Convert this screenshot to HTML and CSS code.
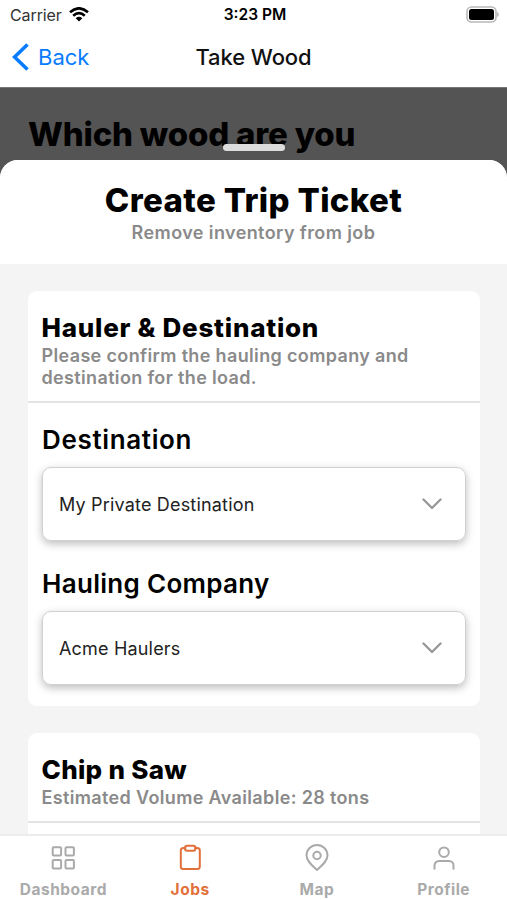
FILE: index.html
```
<!DOCTYPE html>
<html lang="en">
<head>
<meta charset="utf-8">
<title>Take Wood</title>
<link rel="stylesheet" href="styles.css">
</head>
<body>
<div class="phone">
  <header class="top">
    <div class="status">
      <div class="carrier"><span class="carrier-name">Carrier</span>
        <svg class="wifi" viewBox="0 0 20 15" width="20" height="15"><g fill="none" stroke="#000" stroke-width="2.6"><path d="M1 5.2Q10-2.6 19 5.2"/><path d="M4.2 8.7Q10 3.6 15.8 8.7"/></g><path d="M6.7 11.2Q10 8.4 13.3 11.2L10 14.6Z"/></svg>
      </div>
      <span class="time">3:23 PM</span>
      <svg class="battery" viewBox="0 0 34 17" width="34" height="17"><rect x="1" y="1" width="29" height="15" rx="4.5" fill="#fff" stroke="#b9b9b9" stroke-width="1.6"/><rect x="3" y="3" width="25" height="11" rx="2.5"/><path d="M31.6 6.5q1.6 2 0 4z" fill="#aaa" stroke="#aaa" stroke-width=".6"/></svg>
    </div>
    <nav class="navbar">
      <a class="back"><svg viewBox="0 0 17 28" width="17" height="28"><path d="M15.500 1.5 2.500 14l13 12.500" fill="none" stroke="#087cff" stroke-width="3.6"/></svg><span class="back-label">Back</span></a>
      <span class="nav-title">Take Wood</span>
    </nav>
  </header>
  <main class="stage">
    <div class="backdrop"><h2 class="question">Which wood are you</h2><div class="grabber"></div></div>
    <section class="sheet">
      <div class="sheet-head">
        <h1 class="sheet-title">Create Trip Ticket</h1>
        <p class="sheet-sub">Remove inventory from job</p>
      </div>
      <div class="sheet-body">
        <article class="card">
          <div class="card-head">
            <h3 class="card-title">Hauler &amp; Destination</h3>
            <p class="note">Please confirm the hauling company and<br>destination for the load.</p>
          </div>
          <div class="fields">
            <h4 class="label">Destination</h4>
            <div class="select"><span>My Private Destination</span><svg viewBox="0 0 20 12" width="20" height="12"><path d="M1.500 1.500 10 10l8.500-8.500"/></svg></div>
            <h4 class="label second">Hauling Company</h4>
            <div class="select"><span>Acme Haulers</span><svg viewBox="0 0 20 12" width="20" height="12"><path d="M1.500 1.500 10 10l8.500-8.500"/></svg></div>
          </div>
        </article>
        <article class="card next">
          <div class="card-head">
            <h3 class="card-title chip">Chip n Saw</h3>
            <p class="note">Estimated Volume Available: 28 tons</p>
          </div>
        </article>
      </div>
    </section>
  </main>
  <footer class="tabs">
    <a class="tab"><svg viewBox="0 0 28 28" width="28" height="28"><rect x="3.700" y="3.200" width="8.400" height="8.400" rx="1"/><rect x="16.500" y="3.200" width="8.400" height="8.400" rx="1"/><rect x="3.700" y="16" width="8.400" height="8.400" rx="1"/><rect x="16.500" y="16" width="8.400" height="8.400" rx="1"/></svg><span>Dashboard</span></a>
    <a class="tab active"><svg viewBox="0 0 28 28" width="28" height="28"><path d="M9.500 4H7.300a2.500 2.500 0 0 0-2.500 2.500V22.500a2.500 2.500 0 0 0 2.500 2.500h14a2.500 2.500 0 0 0 2.500-2.500V6.500a2.500 2.500 0 0 0-2.500-2.500H19"/><rect x="9" y="1.800" width="10.500" height="5" rx="2.200"/></svg><span>Jobs</span></a>
    <a class="tab"><svg viewBox="0 0 28 28" width="28" height="28"><path d="M14 26C9 21.500 3.500 17 3.500 11.500a10.500 10.500 0 0 1 21 0C24.500 17 19 21.500 14 26Z"/><circle cx="14" cy="11.500" r="3.700"/></svg><span>Map</span></a>
    <a class="tab"><svg viewBox="0 0 28 28" width="28" height="28"><circle cx="14" cy="8.200" r="4.800"/><path d="M4.500 24.800V21.500a4.500 4.500 0 0 1 4.500-4.500h10a4.500 4.500 0 0 1 4.500 4.500v3.300"/></svg><span>Profile</span></a>
  </footer>
</div>
</body>
</html>
```
FILE: styles.css
```
* { box-sizing: border-box; }
body { margin: 0; background: #fff; font-family: Inter, "Liberation Sans", sans-serif; color: #000; }
h1, h2, h3, h4, p { margin: 0; white-space: nowrap; }
.phone { width: 507px; height: 900px; display: flex; flex-direction: column; overflow: hidden; }
.top { height: 87px; flex: none; background: #fff; }
.status { height: 29px; display: grid; grid-template-columns: 1fr auto 1fr; align-items: center; padding: 0 7px 0 10px; }
.carrier { display: flex; align-items: center; gap: 7px; }
.carrier-name { font-size: 16px; letter-spacing: -.1px; color: #333; }
.time { font-size: 15.500px; font-weight: 600; }
.battery { justify-self: end; margin-top: -1px; }
.navbar { height: 58px; display: grid; grid-template-columns: 1fr auto 1fr; align-items: center; padding: 0 12px 2px; }
.back { display: flex; align-items: center; gap: 9px; color: #087cff; }
.back-label { font-size: 22px; }
.nav-title { font-size: 22px; font-weight: 500; letter-spacing: -.1px; color: #111; }
.stage { flex: 1; min-height: 0; background: #545454; border-top: 1px solid #777; display: flex; flex-direction: column; }
.backdrop { height: 72px; flex: none; position: relative; padding: 25px 28px 0; }
.question { font-size: 33px; line-height: 42px; font-weight: 800; letter-spacing: -.2px; }
.grabber { position: absolute; left: 223px; top: 56px; width: 62px; height: 7px; border-radius: 4px; background: #dcdcdc; }
.sheet { flex: 1; min-height: 0; background: #f4f4f4; border-radius: 18px 18px 0 0; overflow: hidden; }
.sheet-head { height: 104px; background: #fff; text-align: center; padding-top: 19px; }
.sheet-title { font-size: 33px; line-height: 42px; font-weight: 800; letter-spacing: .35px; }
.sheet-sub { font-size: 18px; line-height: 22px; font-weight: 600; letter-spacing: .4px; color: #8a8a8a; padding-top: 1px; }
.sheet-body { padding: 27px 27px 0 28px; }
.card { background: #fff; border-radius: 9px; height: 415px; }
.card-head { padding: 20px 13.500px 12px; border-bottom: 2px solid #e4e4e4; }
.card-title { font-size: 26px; line-height: 33px; font-weight: 800; letter-spacing: .75px; }
.card-title.chip { letter-spacing: .3px; }
.note { font-size: 18px; line-height: 22px; font-weight: 600; letter-spacing: .35px; color: #8a8a8a; padding-top: 1px; }
.fields { padding: 20px 14px 0; }
.label { font-size: 26px; line-height: 34px; font-weight: 600; letter-spacing: .65px; margin-bottom: 10px; }
.label.second { margin-top: 26px; letter-spacing: .3px; }
.select { height: 74px; border: 1px solid #d0d0d0; border-radius: 9px; box-shadow: 0 3px 8px rgba(0,0,0,.26); display: flex; align-items: center; justify-content: space-between; padding: 0 23px 0 16px; font-size: 18px; letter-spacing: .18px; color: #222; }
.select svg { fill: none; stroke: #999; stroke-width: 2.4; stroke-linecap: round; stroke-linejoin: round; }
.next { margin-top: 27px; }
.tabs { height: 66px; flex: none; background: #fff; border-top: 2px solid #ececec; display: flex; }
.tab { flex: 1; display: flex; flex-direction: column; align-items: center; color: #aaa; font-size: 15.500px; font-weight: 700; letter-spacing: .5px; padding-top: 8px; gap: 8px; }
.tab svg { fill: none; stroke: currentColor; stroke-width: 2; stroke-linecap: round; stroke-linejoin: round; }
.active { color: #e2703a; }
```
